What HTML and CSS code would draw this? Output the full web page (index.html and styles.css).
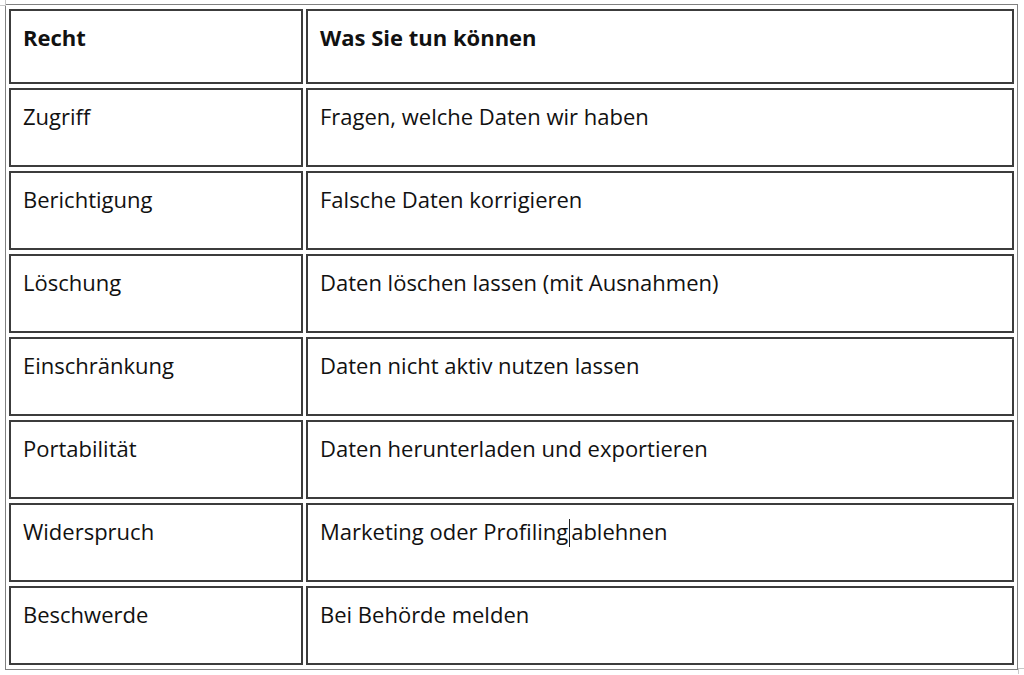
FILE: index.html
```html
<!DOCTYPE html>
<html lang="de">
<head>
<meta charset="utf-8">
<title>Rechte</title>
<link rel="stylesheet" href="styles.css">
</head>
<body>
<div class="page">
  <table class="rights">
    <tr class="head">
      <th class="c1">Recht</th>
      <th class="c2">Was Sie tun können</th>
    </tr>
    <tr><td>Zugriff</td><td>Fragen, welche Daten wir haben</td></tr>
    <tr><td>Berichtigung</td><td>Falsche Daten korrigieren</td></tr>
    <tr><td>Löschung</td><td>Daten löschen lassen (mit Ausnahmen)</td></tr>
    <tr><td>Einschränkung</td><td>Daten nicht aktiv nutzen lassen</td></tr>
    <tr><td>Portabilität</td><td>Daten herunterladen und exportieren</td></tr>
    <tr><td>Widerspruch</td><td>Marketing oder Profiling<span class="caret"></span>ablehnen</td></tr>
    <tr><td>Beschwerde</td><td>Bei Behörde melden</td></tr>
  </table>
  <span class="mark mark-tl"></span>
  <span class="mark mark-br"></span>
</div>
</body>
</html>
```

FILE: styles.css
```css
html, body {
  margin: 0;
  padding: 0;
  background: #fff;
}
body {
  font-family: "Open Sans", "Liberation Sans", Arial, sans-serif;
  color: #111;
  width: 1024px;
  height: 675px;
  overflow: hidden;
}
.page {
  position: relative;
  padding: 4px 0 0 5px;
}
.rights {
  border: 1px solid #808080;
  border-spacing: 3px 4px;
  border-collapse: separate;
  width: 1013px;
  table-layout: fixed;
}
.rights th,
.rights td {
  border: 2px solid #3c3c3c;
  padding: 12px 12px 0 12px;
  vertical-align: top;
  text-align: left;
  font-size: 22px;
  line-height: 28px;
  height: 79px;
  box-sizing: border-box;
}
.rights th {
  font-weight: 700;
  height: 75px;
}
.c1 { width: 294px; }
.caret {
  display: inline-block;
  width: 1px;
  height: 28px;
  background: #222;
  vertical-align: -7px;
  margin: 0 1px 0 1px;
}
.mark {
  position: absolute;
  width: 5px;
  height: 5px;
}
.mark-tl {
  left: 0;
  top: 0;
  border-right: 1px solid #c8c8c8;
  border-bottom: 1px solid #c8c8c8;
}
.mark-br {
  left: 1018px;
  top: 668px;
  border-left: 1px solid #c8c8c8;
  border-top: 1px solid #c8c8c8;
}
```
